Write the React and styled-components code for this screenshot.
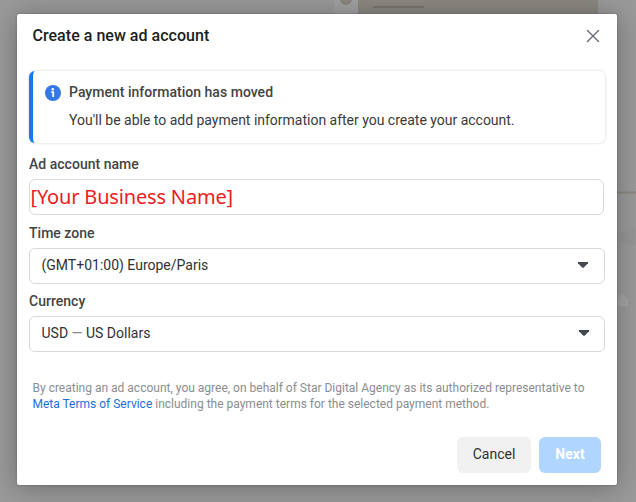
import React from "react";
import styled, { createGlobalStyle } from "styled-components";

const GlobalStyle = createGlobalStyle`
  * { box-sizing: border-box; }
  body { margin: 0; font-family: Roboto, "Liberation Sans", sans-serif; }
`;

const Page = styled.div`
  position: relative;
  width: 636px;
  height: 502px;
  padding: 14px 19px 17px 17px;
  overflow: hidden;
  background: #999999;
`;

const Backdrop = styled.svg`
  position: absolute;
  inset: 0;
`;

const Dialog = styled.section`
  position: relative;
  display: flex;
  flex-direction: column;
  width: 600px;
  height: 471px;
  border-radius: 2px;
  background: #ffffff;
  box-shadow: 0 2px 26px rgba(0, 0, 0, 0.3), 0 0 2px rgba(0, 0, 0, 0.3);
`;

const Header = styled.header`
  display: flex;
  align-items: center;
  justify-content: space-between;
  height: 57px;
  padding: 0 16px 13px 15.5px;
`;

const Title = styled.h1`
  margin: 0;
  font-size: 16px;
  line-height: 20px;
  font-weight: 500;
  letter-spacing: 0.03px;
  color: #1c1e21;
`;

const CloseButton = styled.button`
  display: flex;
  padding: 0;
  border: 0;
  background: none;
`;

const Notice = styled.div`
  display: flex;
  gap: 8px;
  width: 576px;
  height: 72px;
  margin-left: 12px;
  padding: 11px 12px 0;
  border-left: 4px solid #1877f2;
  border-radius: 6px;
  box-shadow: 0 0 3px rgba(0, 0, 0, 0.18);
`;

const NoticeIcon = styled.svg`
  flex: none;
  margin-top: 3px;
`;

const NoticeTitle = styled.h2`
  margin: 0 0 8px;
  font-size: 14px;
  line-height: 20px;
  font-weight: 500;
  letter-spacing: 0.02px;
  color: #444444;
`;

const NoticeText = styled.p`
  margin: 0;
  font-size: 14px;
  line-height: 20px;
  letter-spacing: -0.01px;
  color: #3a3a3a;
`;

const Form = styled.form`
  display: flex;
  flex-direction: column;
  gap: 8px;
  padding: 11px 12px 0;
`;

const Field = styled.div`
  display: flex;
  flex-direction: column;
  gap: 5px;
  height: ${(p) => p.$height || "60px"};
`;

const Label = styled.label`
  font-size: 14px;
  line-height: 20px;
  font-weight: 500;
  letter-spacing: 0.02px;
  color: #444444;
`;

const Control = styled.div`
  display: flex;
  flex: none;
  align-items: center;
  justify-content: space-between;
  width: ${(p) => p.$width || "576px"};
  height: 36px;
  padding: 0 ${(p) => p.$caretInset || "15px"} 2px 11.5px;
  border: 1px solid #d8d9da;
  border-radius: 6px;
  font-size: 14px;
  color: #303236;
`;

const NameControl = styled(Control)`
  padding: 0 0.5px 1px;
  font-family: "Noto Sans", sans-serif;
  font-size: 20px;
  letter-spacing: -0.17px;
  color: #ed1c24;
`;

const Dash = styled.span`
  color: #8a8a8a;
`;

const Terms = styled.p`
  margin: 29px 0 0 15.5px;
  font-size: 12px;
  line-height: 16px;
  color: #8a8d91;
`;

const TermsLine = styled.span`
  display: block;
  white-space: nowrap;
`;

const TermsLink = styled.a`
  color: #216fdb;
`;

const Actions = styled.footer`
  display: flex;
  justify-content: flex-end;
  gap: 8px;
  margin-top: auto;
  padding: 0 16px 12px;
`;

const Button = styled.button`
  width: ${(p) => (p.$primary ? "62px" : "74px")};
  height: 36px;
  padding: 0 0 2px;
  border: 0;
  border-radius: 6px;
  background: ${(p) => (p.$primary ? "#b0d5ff" : "#f1f1f1")};
  color: ${(p) => (p.$primary ? "#ffffff" : "#303030")};
  font-family: inherit;
  font-size: 14px;
  font-weight: ${(p) => (p.$primary ? 700 : 400)};
`;

const Caret = () => (
  <svg width="10" height="6" viewBox="0 0 10 6">
    <path d="M0 0H10V1.2L5.8 5.6Q5 6.2 4.2 5.6L0 1.2Z" fill="#444950" />
  </svg>
);

export default function App() {
  return (
    <>
      <GlobalStyle />
      <Page>
        <Backdrop width="636" height="502" viewBox="0 0 636 502">
          <rect x="334" width="24" height="14" fill="#a0a0a0" />
          <circle cx="346" cy="-1" r="6" fill="#89867f" />
          <rect x="358" width="240" height="14" fill="#8b8882" />
          <rect x="373" y="6" width="51" height="2" fill="#7b746f" />
          <rect x="616" y="191.5" width="20" height="2" fill="#8b8680" />
          <path d="M617 234L628 230Q632 226 636 228V245Q629 247 625 243L617 240Z" fill="#959595" />
          <path d="M617 299L622 293L628 299V306H617Z" fill="#a3a3a3" />
        </Backdrop>
        <Dialog role="dialog">
          <Header>
            <Title>Create a new ad account</Title>
            <CloseButton type="button" aria-label="Close">
              <svg width="16" height="14" viewBox="0 0 16 14">
                <path d="M2.5 1.5L13.5 12.5M13.5 1.5L2.5 12.5" stroke="#666a76" strokeWidth="1.4" strokeLinecap="round" />
              </svg>
            </CloseButton>
          </Header>
          <Notice>
            <NoticeIcon width="16" height="16" viewBox="0 0 16 16">
              <circle cx="8" cy="8" r="8" fill="#3578e5" />
              <circle cx="7.8" cy="4.3" r="1.3" fill="#fff" />
              <path d="M6.2 7.2H8.2V12" fill="none" stroke="#fff" strokeWidth="1.8" />
            </NoticeIcon>
            <div>
              <NoticeTitle>Payment information has moved</NoticeTitle>
              <NoticeText>You'll be able to add payment information after you create your account.</NoticeText>
            </div>
          </Notice>
          <Form>
            <Field $height="61px">
              <Label>Ad account name</Label>
              <NameControl $width="575px">[Your Business Name]</NameControl>
            </Field>
            <Field>
              <Label>Time zone</Label>
              <Control $caretInset="16px">
                <span>(GMT+01:00) Europe/Paris</span>
                <Caret />
              </Control>
            </Field>
            <Field>
              <Label>Currency</Label>
              <Control>
                <span>USD <Dash>—</Dash> US Dollars</span>
                <Caret />
              </Control>
            </Field>
          </Form>
          <Terms>
            <TermsLine>By creating an ad account, you agree, on behalf of Star Digital Agency as its authorized representative to</TermsLine>
            <TermsLine>
              <TermsLink>Meta Terms of Service</TermsLink> including the payment terms for the selected payment method.
            </TermsLine>
          </Terms>
          <Actions>
            <Button type="button">Cancel</Button>
            <Button type="button" $primary>Next</Button>
          </Actions>
        </Dialog>
      </Page>
    </>
  );
}
